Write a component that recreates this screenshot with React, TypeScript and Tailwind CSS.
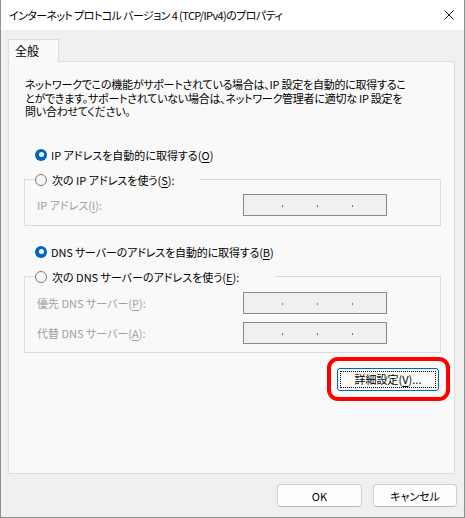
import React from 'react';

const u = (c: string) => <span className="underline underline-offset-2">{c}</span>;

const Radio = ({ checked }: { checked?: boolean }) =>
  checked ? (
    <span className="w-[12px] h-[12px] rounded-full bg-[#0067c0] flex items-center justify-center shrink-0">
      <span className="w-[5px] h-[5px] rounded-full bg-white" />
    </span>
  ) : (
    <span className="w-[12px] h-[12px] rounded-full border border-[#7a7a7a] bg-[#f6f6f6] shrink-0" />
  );

const IpBox = () => (
  <div className="w-[144px] h-[22px] border border-[#8a8a8a] bg-[#f0f0f0] flex items-center pl-[38px] gap-[34px] pt-[3px]">
    <span className="w-[1px] h-[2px] bg-[#6f7c90]" />
    <span className="w-[1px] h-[2px] bg-[#6f7c90]" />
    <span className="w-[1px] h-[2px] bg-[#6f7c90]" />
  </div>
);

const Field = ({ children }: { children: React.ReactNode }) => (
  <div className="flex items-center pl-[12px]">
    <span className="w-[206px] text-[#a0a0a0]">{children}</span>
    <IpBox />
  </div>
);

export default function App() {
  return (
    <div className="w-[465px] h-[518px] flex flex-col bg-[#f0f0f0] border-x border-b border-[#8f8f8f] text-[11px] leading-[16px] text-black font-['Noto_Sans_CJK_JP',sans-serif] [font-feature-settings:'palt']">
      {/* Title bar */}
      <div className="h-[30px] bg-white flex items-center justify-between pl-[8px] pr-[9px] shrink-0">
        <span className="tracking-[-0.6px]">インターネット プロトコル バージョン 4 (TCP/IPv4)のプロパティ</span>
        <svg width="10" height="10" viewBox="0 0 10 10" className="mr-[1px]">
          <path d="M0.5 0.5 L9.5 9.5 M9.5 0.5 L0.5 9.5" stroke="#1a1a1a" strokeWidth="1" />
        </svg>
      </div>

      <div className="flex flex-col pl-[7px] pr-[9px] pt-[9px]">
        {/* Tab */}
        <div className="relative z-10 w-[51px] h-[23px] -mb-[1px] bg-[#f9f9f9] border-x border-t border-[#dcdcdc] flex items-center pl-[6px] pb-[1px] text-[12px]">
          全般
        </div>

        {/* Panel */}
        <div className="h-[413px] bg-[#f9f9f9] border border-[#dcdcdc] flex flex-col">
          <div className="pl-[16px] pt-[16px] flex flex-col whitespace-nowrap tracking-[-0.25px]">
            <span className="h-[13.5px] leading-[13.5px]">ネットワークでこの機能がサポートされている場合は、IP 設定を自動的に取得するこ</span>
            <span className="h-[13.5px] leading-[13.5px]">とができます。サポートされていない場合は、ネットワーク管理者に適切な IP 設定を</span>
            <span className="h-[13.5px] leading-[13.5px]">問い合わせてください。</span>
          </div>

          <div className="mt-[28px] ml-[26px] h-[16px] flex items-center gap-[4px]">
            <Radio checked />
            <span>IP アドレスを自動的に取得する({u('O')})</span>
          </div>

          <div className="mt-[16px] ml-[15px] mr-[13px] border border-[#dcdcdc] pb-[9px]">
            <div className="-mt-[9px] ml-[10px] w-fit h-[18px] bg-[#f9f9f9] flex items-center gap-[5px] pr-[24px]">
              <Radio />
              <span>次の IP アドレスを使う({u('S')}):</span>
            </div>
            <div className="mt-[5px]">
              <Field>IP アドレス({u('I')}):</Field>
            </div>
          </div>

          <div className="mt-[18px] ml-[26px] h-[16px] flex items-center gap-[4px]">
            <Radio checked />
            <span className="tracking-[-0.15px]">DNS サーバーのアドレスを自動的に取得する({u('B')})</span>
          </div>

          <div className="mt-[16px] ml-[15px] mr-[13px] border border-[#dcdcdc] pb-[8px]">
            <div className="-mt-[9px] ml-[10px] w-fit h-[18px] bg-[#f9f9f9] flex items-center gap-[5px] pr-[36px]">
              <Radio />
              <span>次の DNS サーバーのアドレスを使う({u('E')}):</span>
            </div>
            <div className="mt-[6px] flex flex-col gap-[8px]">
              <Field>優先 DNS サーバー({u('P')}):</Field>
              <Field>代替 DNS サーバー({u('A')}):</Field>
            </div>
          </div>

          <div className="mt-[4px] mr-[4px] flex justify-end">
            <div className="border-4 border-[#ff0000] rounded-[11px] pl-[6px] pr-[7px] pt-[7px] pb-[6px]">
              <button className="w-[102px] h-[23px] rounded-[3px] border border-[#0067c0] bg-[#fdfdfd] p-[2px]">
                <span className="w-full h-full border border-dotted border-black flex items-center justify-center">
                  詳細設定({u('V')})...
                </span>
              </button>
            </div>
          </div>
        </div>
      </div>

      {/* Bottom buttons */}
      <div className="mt-[10px] flex justify-end gap-[11px] pr-[7px]">
        <button className="w-[85px] h-[23px] rounded-[4px] border border-[#d0d0d0] border-b-[#b8b8b8] bg-[#fdfdfd] flex items-center justify-center">
          OK
        </button>
        <button className="w-[84px] h-[23px] rounded-[4px] border border-[#d0d0d0] border-b-[#b8b8b8] bg-[#fdfdfd] flex items-center justify-center">
          キャンセル
        </button>
      </div>
    </div>
  );
}
